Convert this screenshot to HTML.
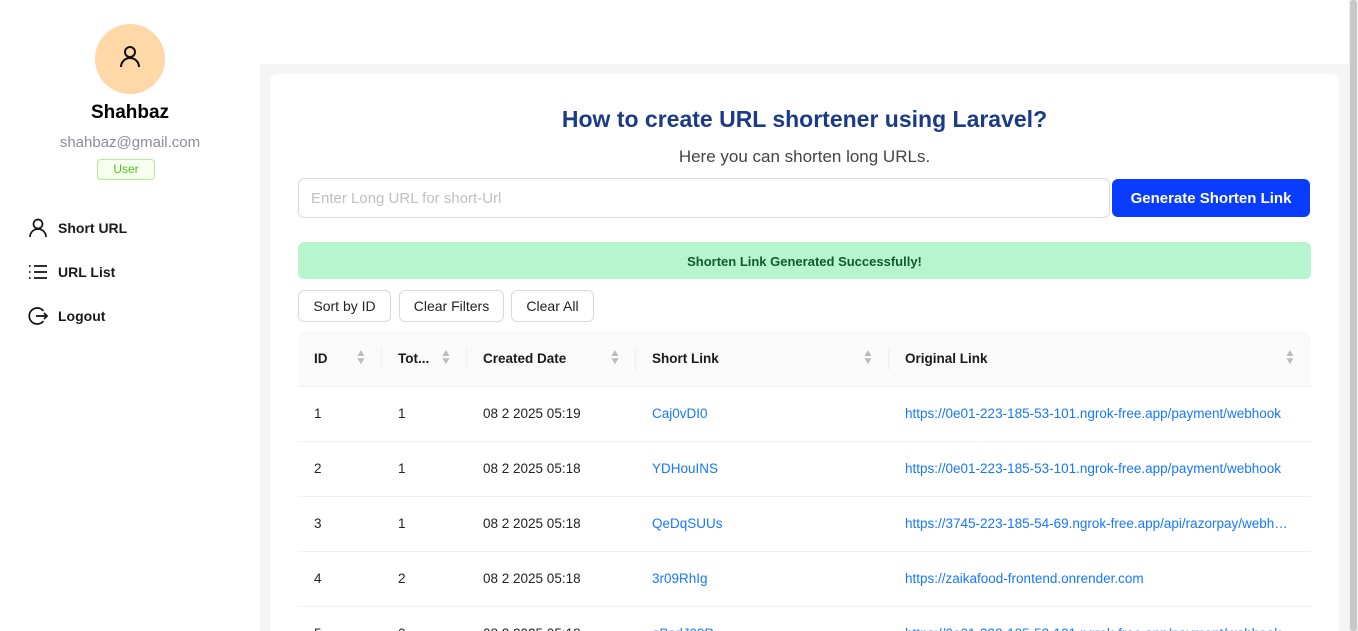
<!DOCTYPE html>
<html style="overflow:hidden"><head><meta charset="utf-8"><style>
*{box-sizing:border-box;margin:0;padding:0}
html,body{width:1358px;height:631px;overflow:hidden}
body{background:#fff;font-family:"Liberation Sans","DejaVu Sans",sans-serif;position:relative;color:#000}
.sb{position:absolute;left:0;top:0;width:260px;height:631px;background:#fff}
.av{position:absolute;left:95px;top:24px;width:70px;height:70px;border-radius:50%;background:#ffd8a8}
.name{position:absolute;left:0;width:260px;top:102px;text-align:center;font-size:19px;font-weight:bold}
.mail{position:absolute;left:0;width:260px;top:134px;text-align:center;font-size:15px;color:#8c8c9c}
.tag{position:absolute;left:97px;top:159px;width:58px;height:21px;border:1px solid #b7eb8f;background:#f6ffed;color:#52c41a;font-size:12px;text-align:center;line-height:19px;border-radius:4px}
.nav{position:absolute;left:28px;font-size:14px;font-weight:bold;color:#1a1a1a;display:flex;align-items:center}
.nav svg{margin-right:10px}
.main{position:absolute;left:260px;top:64px;width:1089px;height:567px;background:#f5f5f5}
.scroll{position:absolute;left:1349px;top:0;width:9px;height:631px;background:#f1f1f1}
.scroll div{position:absolute;left:1px;top:0;width:7px;height:631px;background:#c8c8c8;border-radius:3px}
.card{position:absolute;left:270px;top:74px;width:1069px;height:557px;background:#fff;border-radius:8px 8px 0 0}
h1{position:absolute;left:270px;width:1069px;top:106px;text-align:center;font-size:23px;color:#1c3a8a}
.sub{position:absolute;left:270px;width:1069px;top:147px;text-align:center;font-size:17px;color:#444}
.inp{position:absolute;left:298px;top:178px;width:812px;height:40px;border:1px solid #d9d9d9;border-radius:6px;font-size:15px;color:#bfbfbf;padding:11px 12px}
.btn{position:absolute;left:1112px;top:179px;width:198px;height:38px;background:#0a3cff;color:#fff;border-radius:6px;font-weight:bold;font-size:15px;text-align:center;line-height:40px}
.ok{position:absolute;left:298px;top:242px;width:1013px;height:37px;background:#b7f5cf;border-radius:6px;color:#135a2a;font-size:13px;font-weight:bold;text-align:center;line-height:39px}
.fb{position:absolute;top:290px;height:32px;border:1px solid #d9d9d9;border-radius:6px;font-size:14px;line-height:31px;text-align:center;color:#222}
.tw{position:absolute;left:298px;top:331px;width:1013px;height:300px;overflow:hidden}
table{width:1013px;border-collapse:collapse;font-size:13.5px;table-layout:fixed}
th{background:#fafafa;height:55px;text-align:left;padding-left:16px;font-weight:bold;color:#1a1a1a;border-bottom:1px solid #f0f0f0;position:relative;font-size:13.5px}
th:first-child{border-top-left-radius:8px}th:last-child{border-top-right-radius:8px}
th .s{position:absolute;right:16px;top:19px;color:#bbb;font-size:10px;line-height:8px;transform:scaleX(1.2)}
th .d{position:absolute;right:0;top:17px;height:22px;border-right:1px solid #eee}
td{height:55px;padding-left:16px;padding-right:16px;border-bottom:1px solid #f0f0f0;white-space:nowrap;overflow:hidden;text-overflow:ellipsis;color:#222}
td.l{color:#1677ff}
</style></head><body>
<div class="sb">
<div class="av"><svg style="position:absolute;left:24px;top:20px" width="22" height="24" viewBox="0 0 22 24" fill="none" stroke="#111" stroke-width="2"><circle cx="11" cy="8" r="5"/><path d="M2 23c0-5 4-9 9-9s9 4 9 9"/></svg></div>
<div class="name">Shahbaz</div>
<div class="mail">shahbaz@gmail.com</div>
<div class="tag">User</div>
<div class="nav" style="top:218px"><svg width="20" height="20" viewBox="0 0 20 20" fill="none" stroke="#111" stroke-width="1.7"><circle cx="10" cy="6" r="4.5"/><path d="M2 19c0-4.5 3.5-8 8-8s8 3.5 8 8"/></svg>Short URL</div>
<div class="nav" style="top:262px"><svg width="20" height="20" viewBox="0 0 20 20" fill="none" stroke="#111" stroke-width="1.7"><path d="M6 4h13M6 10h13M6 16h13M1 4h1.5M1 10h1.5M1 16h1.5"/></svg>URL List</div>
<div class="nav" style="top:306px"><svg width="20" height="20" viewBox="0 0 20 20" fill="none" stroke="#111" stroke-width="1.7"><path d="M15.5 5A8 8 0 1 0 15.5 15"/><path d="M8 10h11M16 7l3 3-3 3"/></svg>Logout</div>
</div>
<div class="main"></div>
<div class="scroll"><div></div></div>
<div class="card"></div>
<h1>How to create URL shortener using Laravel?</h1>
<div class="sub">Here you can shorten long URLs.</div>
<div class="inp">Enter Long URL for short-Url</div>
<div class="btn">Generate Shorten Link</div>
<div class="ok">Shorten Link Generated Successfully!</div>
<div class="fb" style="left:298px;width:93px">Sort by ID</div>
<div class="fb" style="left:399px;width:105px">Clear Filters</div>
<div class="fb" style="left:511px;width:83px">Clear All</div>
<div class="tw"><table>
<colgroup><col style="width:84px"><col style="width:85px"><col style="width:169px"><col style="width:253px"><col></colgroup>
<tr><th>ID<span class="s">▲<br>▼</span><span class="d"></span></th><th>Tot...<span class="s">▲<br>▼</span><span class="d"></span></th><th>Created Date<span class="s">▲<br>▼</span><span class="d"></span></th><th>Short Link<span class="s">▲<br>▼</span><span class="d"></span></th><th>Original Link<span class="s">▲<br>▼</span></th></tr>
<tr><td>1</td><td>1</td><td>08 2 2025 05:19</td><td class="l">Caj0vDI0</td><td class="l">https://0e01-223-185-53-101.ngrok-free.app/payment/webhook</td></tr>
<tr><td>2</td><td>1</td><td>08 2 2025 05:18</td><td class="l">YDHouINS</td><td class="l">https://0e01-223-185-53-101.ngrok-free.app/payment/webhook</td></tr>
<tr><td>3</td><td>1</td><td>08 2 2025 05:18</td><td class="l">QeDqSUUs</td><td class="l">https://3745-223-185-54-69.ngrok-free.app/api/razorpay/webhook</td></tr>
<tr><td>4</td><td>2</td><td>08 2 2025 05:18</td><td class="l">3r09RhIg</td><td class="l">https://zaikafood-frontend.onrender.com</td></tr>
<tr><td>5</td><td>0</td><td>08 2 2025 05:18</td><td class="l">aBcdJ09D</td><td class="l">https://0e01-223-185-53-101.ngrok-free.app/payment/webhook</td></tr>
</table></div>
</body></html>
